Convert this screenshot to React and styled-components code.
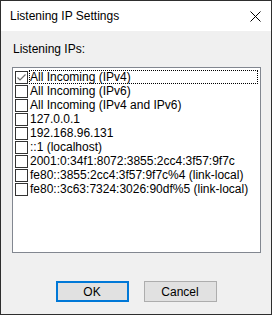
import React, { useState } from "react";
import styled, { createGlobalStyle } from "styled-components";

const GlobalStyle = createGlobalStyle`
  html, body {
    margin: 0;
    padding: 0;
    background: #ffffff;
  }
  * {
    box-sizing: border-box;
  }
`;

const Window = styled.div`
  width: 272px;
  height: 315px;
  border: 1px solid #2e2e2e;
  display: flex;
  flex-direction: column;
  font-family: "Liberation Sans", Arial, sans-serif;
  font-size: 12px;
  color: #000;
  background: #f0f0f0;
`;

const TitleBar = styled.div`
  height: 30px;
  background: #ffffff;
  display: flex;
  align-items: center;
  justify-content: space-between;
  padding: 0 9px 0 9px;
  flex-shrink: 0;
`;

const Title = styled.div`
  font-size: 12px;
  line-height: 16px;
  padding-bottom: 1px;
`;

const CloseButton = styled.div`
  width: 12px;
  height: 12px;
  display: flex;
  align-items: center;
  justify-content: center;
  margin-right: 1px;
`;

const Body = styled.div`
  flex: 1;
  display: flex;
  flex-direction: column;
  padding: 11px 10px 0 11px;
`;

const Label = styled.div`
  line-height: 14px;
  height: 14px;
  margin-bottom: 11px;
  padding-left: 1px;
`;

const ListBox = styled.div`
  height: 186px;
  background: #ffffff;
  border: 1px solid #828790;
  padding: 2px 2px;
  display: flex;
  flex-direction: column;
`;

const Row = styled.div`
  display: flex;
  align-items: center;
  height: 14px;
`;

const Box = styled.div`
  width: 13px;
  height: 13px;
  border: 1px solid #333333;
  background: #ffffff;
  flex-shrink: 0;
  display: flex;
  align-items: center;
  justify-content: center;
  margin-right: 1px;
`;

const ItemText = styled.div`
  flex: 1;
  height: 14px;
  line-height: 14px;
  padding-left: 1px;
  white-space: nowrap;
  outline: ${(p) => (p.$focused ? "1px dotted #000" : "none")};
  outline-offset: -1px;
`;

const ButtonRow = styled.div`
  display: flex;
  justify-content: center;
  gap: 15px;
  margin-top: 28px;
  padding-right: 1px;
`;

const Button = styled.button`
  width: 73px;
  height: 21px;
  font-family: inherit;
  font-size: 12px;
  color: #000;
  background: #e1e1e1;
  border: ${(p) => (p.$primary ? "2px solid #0078d7" : "1px solid #adadad")};
  padding: 0;
  line-height: 16px;
`;

const items = [
  "All Incoming (IPv4)",
  "All Incoming (IPv6)",
  "All Incoming (IPv4 and IPv6)",
  "127.0.0.1",
  "192.168.96.131",
  "::1 (localhost)",
  "2001:0:34f1:8072:3855:2cc4:3f57:9f7c",
  "fe80::3855:2cc4:3f57:9f7c%4 (link-local)",
  "fe80::3c63:7324:3026:90df%5 (link-local)",
];

const App = () => {
  const [checked, setChecked] = useState([0]);

  const toggle = (i) => {
    setChecked((c) => (c.includes(i) ? c.filter((x) => x !== i) : [...c, i]));
  };

  return (
    <>
      <GlobalStyle />
      <Window>
        <TitleBar>
          <Title>Listening IP Settings</Title>
          <CloseButton>
            <svg width="11" height="11" viewBox="0 0 11 11">
              <path d="M0.5 0.5 L10.5 10.5 M10.5 0.5 L0.5 10.5" stroke="#000" strokeWidth="1" fill="none" />
            </svg>
          </CloseButton>
        </TitleBar>
        <Body>
          <Label>Listening IPs:</Label>
          <ListBox>
            {items.map((item, i) => (
              <Row key={item} onClick={() => toggle(i)}>
                <Box>
                  {checked.includes(i) && (
                    <svg width="11" height="11" viewBox="0 0 11 11">
                      <polyline points="1.5,5.5 4,8 9.5,2.5" stroke="#6d6d6d" strokeWidth="1.2" fill="none" />
                    </svg>
                  )}
                </Box>
                <ItemText $focused={i === 0}>{item}</ItemText>
              </Row>
            ))}
          </ListBox>
          <ButtonRow>
            <Button $primary>OK</Button>
            <Button>Cancel</Button>
          </ButtonRow>
        </Body>
      </Window>
    </>
  );
};

export default App;
